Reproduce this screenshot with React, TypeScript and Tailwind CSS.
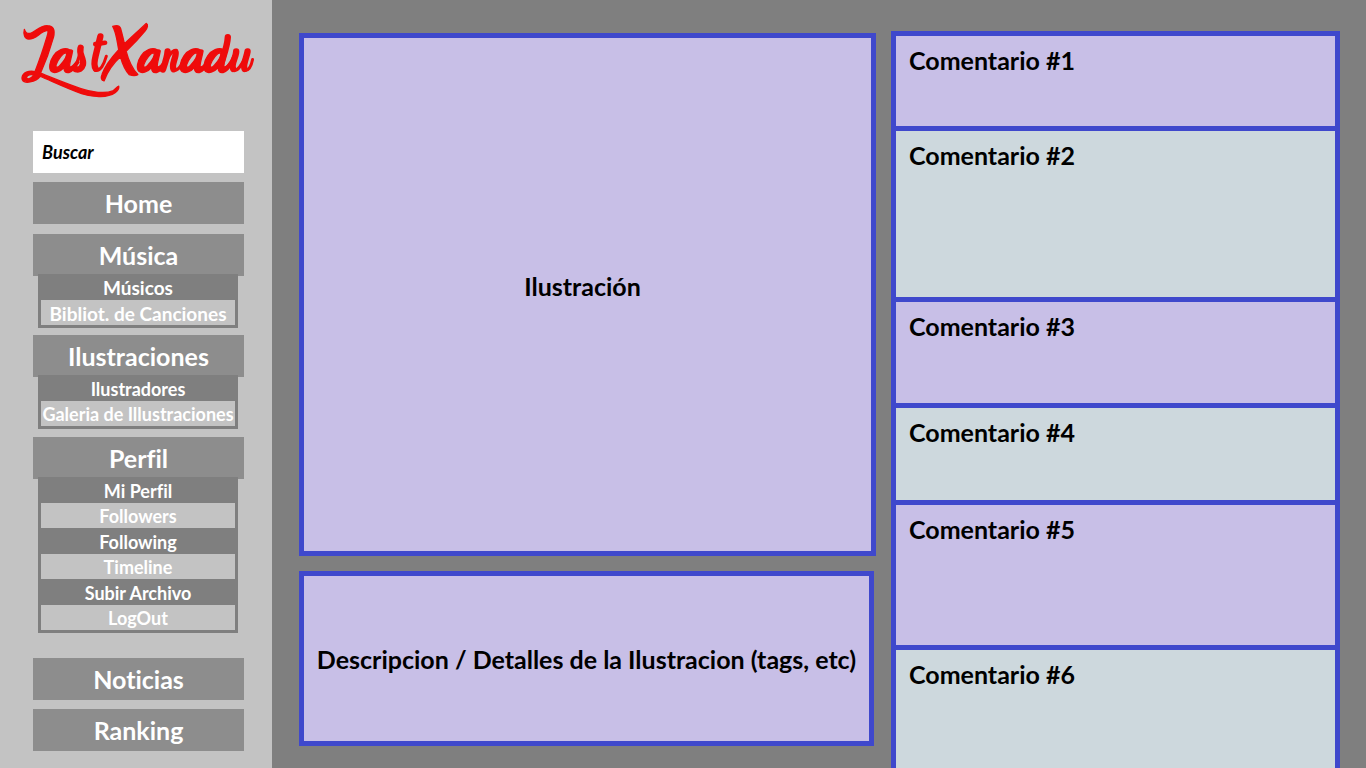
const comments = [
  { title: "Comentario #1", size: "h-[95px]", tone: "bg-[#c8bfe7]" },
  { title: "Comentario #2", size: "h-[171px]", tone: "bg-[#cdd8dd]" },
  { title: "Comentario #3", size: "h-[106px]", tone: "bg-[#c8bfe7]" },
  { title: "Comentario #4", size: "h-[97px]", tone: "bg-[#cdd8dd]" },
  { title: "Comentario #5", size: "h-[145px]", tone: "bg-[#c8bfe7]" },
];

const bowl =
  "M178 119C162 110 141 121 130 137C118 154 115 176 124 184C134 191 150 184 162 171C160 183 166 189 176 187C188 184 198 170 206 156L200 152C192 162 184 172 179 170C175 166 184 142 187 122C184 118 180 120 178 119ZM169 128C158 127 144 147 138 163C135 173 142 174 150 165C161 153 171 136 169 128Z";

function Logo() {
  return (
    <svg viewBox="0 0 795 300" className="block w-full" role="img" aria-label="LastXanadu" fill="none" strokeLinecap="round" strokeLinejoin="round">
      <g fill="#ef0b0b" fillRule="evenodd" stroke="#ef0b0b" strokeWidth="4">
        <path d="M43 58C39 72 44 86 56 87C78 88 90 64 112 61C116 63 112 76 108 88C98 122 86 155 75 184C56 179 38 188 36 202C35 214 46 218 60 215C75 212 85 205 90 198C132 216 174 236 214 250C252 263 294 261 314 247C322 241 326 233 325 228C319 229 316 237 307 242C284 251 244 246 212 235C172 222 130 204 91 189C105 158 120 117 130 81C135 61 130 47 112 47C89 46 76 65 61 70C49 72 45 66 43 58ZM50 204C47 197 57 191 71 194C67 202 55 209 50 204Z" />
        <path d={bowl} />
        <path d="M307 49C318 45 327 46 330 54C334 67 338 84 342 101C363 81 387 59 407 40C414 43 411 54 404 62C387 83 367 104 347 123C354 150 363 173 382 193C376 197 364 196 356 193C344 180 336 161 330 140C311 157 294 178 281 212C273 210 271 203 275 193C283 170 300 146 325 119C320 94 318 67 307 49Z" />
        <path d={bowl} transform="translate(262)" />
        <path d={bowl} transform="translate(390)" />
        <path d={bowl} transform="translate(461)" />
      </g>
      <g stroke="#ef0b0b" strokeWidth="19">
        <path strokeWidth="9" d="M200 158L211 122" />
        <path d="M211 113C205 133 222 145 218 163C214 176 206 180 197 177" />
        <path d="M270 79L256 137C252 153 250 167 256 175" />
        <path strokeWidth="9" d="M254 180C270 185 281 162 288 138" />
        <path strokeWidth="14" d="M255 102L284 98" />
        <path d="M471 124C470 141 463 160 457 178" />
        <path strokeWidth="10" d="M459 172C468 147 483 119 497 121" />
        <path d="M495 127C497 143 481 164 489 177" />
        <path strokeWidth="9" d="M490 181C502 181 511 168 518 154" />
        <path d="M651 81C650 106 640 132 632 158C629 168 630 174 633 177" />
        <path strokeWidth="9" d="M633 182C647 180 660 158 671 135" />
        <path d="M676 124C676 141 660 162 667 176" />
        <path strokeWidth="9" d="M668 181C685 184 697 153 708 131" />
        <path d="M710 124C708 140 695 164 701 176" />
        <path strokeWidth="9" d="M704 181C716 180 722 163 725 148" />
      </g>
    </svg>
  );
}

function MenuHeading({ children }: { children: string }) {
  return (
    <a href="#" className="flex h-[42px] items-center justify-center bg-[#8d8d8d] text-[25px]">
      {children}
    </a>
  );
}

function SubMenu({ items, text }: { items: string[]; text: string }) {
  return (
    <ul className={`relative mr-1.5 ml-[5px] -mt-0.5 bg-[#7f7f7f] px-[3px] pb-[3px] whitespace-nowrap ${text}`}>
      {items.map((item, i) => (
        <li key={item} className={i % 2 ? "h-[25px] bg-[#c3c3c3]" : "h-[26px]"}>
          <a href="#" className="flex h-full items-center justify-center pt-0.5">
            {item}
          </a>
        </li>
      ))}
    </ul>
  );
}

export default function App() {
  return (
    <div className="flex min-h-screen bg-[#7f7f7f] font-['Lato',sans-serif] font-bold text-black [font-variant-ligatures:none]">
      <aside className="w-[272px] shrink-0 bg-[#c3c3c3]">
        <div className="-mr-1 pt-2.5 pl-2.5">
          <Logo />
        </div>
        <div className="mx-7 mt-[21px] pl-[5px]">
          <input
            type="search"
            aria-label="Buscar"
            placeholder="Buscar"
            className="block h-[42px] w-full bg-white px-[9px] font-['Lato',sans-serif] text-[18px] font-bold text-black italic outline-none placeholder:text-black placeholder:opacity-100"
          />
          <nav className="mt-[9px] text-white">
            <MenuHeading>Home</MenuHeading>
            <div className="mt-2.5">
              <MenuHeading>Música</MenuHeading>
              <SubMenu text="text-[19px]" items={["Músicos", "Bibliot. de Canciones"]} />
            </div>
            <div className="mt-[7px]">
              <MenuHeading>Ilustraciones</MenuHeading>
              <SubMenu text="text-[18px]" items={["Ilustradores", "Galeria de Illustraciones"]} />
            </div>
            <div className="mt-2">
              <MenuHeading>Perfil</MenuHeading>
              <SubMenu
                text="text-[18px]"
                items={["Mi Perfil", "Followers", "Following", "Timeline", "Subir Archivo", "LogOut"]}
              />
            </div>
            <div className="mt-[25px] grid gap-[9px]">
              <MenuHeading>Noticias</MenuHeading>
              <MenuHeading>Ranking</MenuHeading>
            </div>
          </nav>
        </div>
      </aside>
      <main className="grid min-w-0 flex-1 grid-cols-[577fr_449fr] gap-x-[15px] pr-[26px] pl-[27px] text-[25px]">
        <div className="flex min-w-0 flex-col gap-[15px] pt-[33px] pb-[22px]">
          <section className="flex min-h-[523px] flex-[3] items-center justify-center border-5 border-[#3f48cc] bg-[#c8bfe7] pr-2.5 pb-4">
            <h1>Ilustración</h1>
          </section>
          <section className="mr-0.5 flex min-h-[175px] flex-1 items-center justify-center border-5 border-[#3f48cc] bg-[#c8bfe7] pt-0.5 text-center">
            <h2>Descripcion / Detalles de la Ilustracion (tags, etc)</h2>
          </section>
        </div>
        <section aria-label="Comentarios" className="mt-[31px] flex min-w-0 flex-col border-5 border-b-0 border-[#3f48cc]">
          {comments.map((c) => (
            <article key={c.title} className={`shrink-0 border-b-5 border-[#3f48cc] px-[13px] pt-1.5 ${c.size} ${c.tone}`}>
              <h2>{c.title}</h2>
            </article>
          ))}
          <article className="flex-1 bg-[#cdd8dd] px-[13px] pt-1.5">
            <h2>Comentario #6</h2>
          </article>
        </section>
      </main>
    </div>
  );
}
